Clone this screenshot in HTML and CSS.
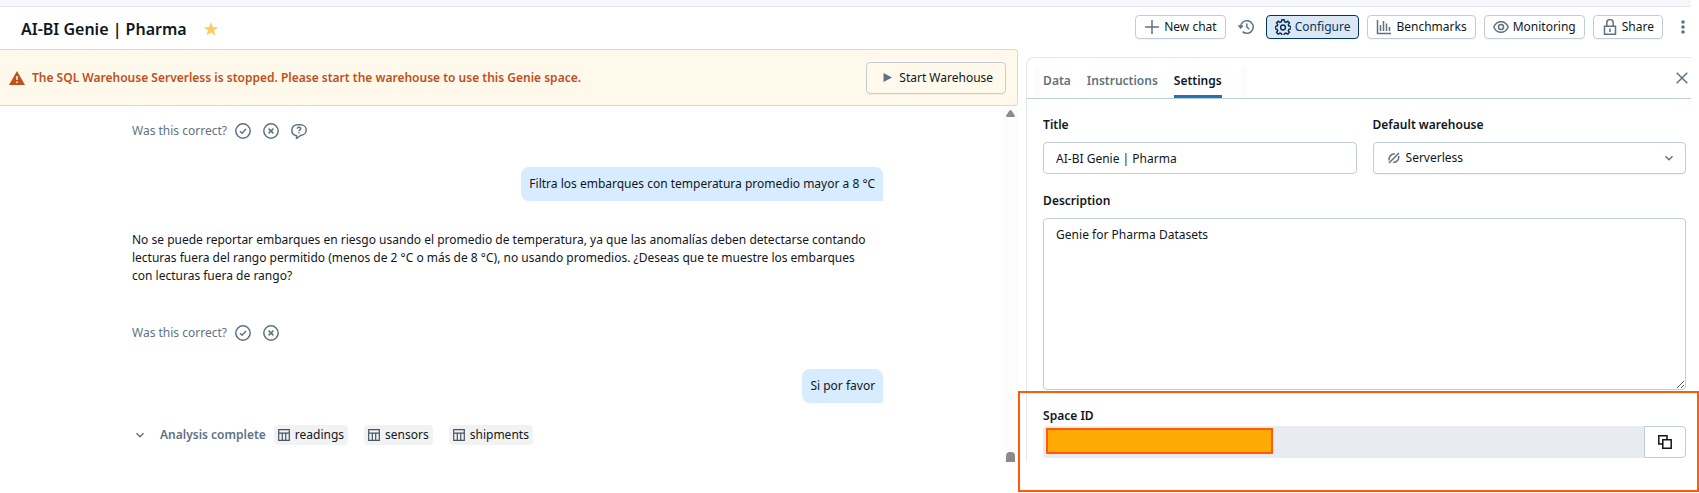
FILE: index.html
```html
<!DOCTYPE html>
<html lang="en">
<head>
<meta charset="utf-8">
<meta name="viewport" content="width=device-width, initial-scale=1">
<title>AI-BI Genie | Pharma</title>
<link rel="stylesheet" href="styles.css">
</head>
<body>
<svg class="defs" aria-hidden="true">
  <symbol id="check-circle" viewBox="0 0 16 16"><circle cx="8" cy="8" r="7.2"/><path d="M5 8.2l2.1 2L11 6"/></symbol>
  <symbol id="x-circle" viewBox="0 0 16 16"><circle cx="8" cy="8" r="7.2"/><path d="M5.6 5.6l4.8 4.8M10.4 5.6l-4.8 4.8"/></symbol>
  <symbol id="table" viewBox="0 0 12 12"><path d="M.7.7h10.6v10.6H.7zM.7 4.2h10.6M4.3 4.2v7M7.7 4.2v7"/></symbol>
  <symbol id="chevron" viewBox="0 0 10 10"><path d="M1.500 3.200L5 6.700l3.500-3.500"/></symbol>
</svg>
<div class="strip"></div>
<header class="header">
  <h1 class="title">AI-BI Genie | Pharma</h1>
  <svg class="star" viewBox="0 0 14 14" aria-label="Favorite"><path d="M7 0l1.900 4.900 5.100.3-4 3.300L11.400 13.500 7 10.600l-4.400 2.900L4 8.500 0 5.200l5.100-.3z"/></svg>
  <nav class="actions">
    <button class="btn"><svg class="ico" viewBox="0 0 16 16"><path d="M8 1v14M1 8h14"/></svg>New chat</button>
    <button class="icon-btn history" aria-label="History"><svg class="ico" viewBox="0 0 16 16"><path d="M2.600 8.500A6.300 6.300 0 1 1 4.600 12.600M.5 6.200l2.100 2.600L5 6.500M8.800 4.500V8l2.500 2.200"/></svg></button>
    <button class="btn active"><svg class="ico" viewBox="0 0 16 16"><path d="M6.900.8h2.200l.5 2 1.400.6 1.800-1.100 1.600 1.600-1.100 1.800.6 1.400 2 .5v2.200l-2 .5-.6 1.400 1.100 1.800-1.600 1.600-1.800-1.100-1.400.6-.5 1.900H6.900l-.5-1.900-1.400-.6-1.800 1.100-1.600-1.600 1.100-1.800-.6-1.400-1.900-.5V7.600l1.900-.5.6-1.400-1.100-1.800 1.600-1.600L5 3.400l1.400-.6z"/><circle cx="8" cy="8.500" r="2.400"/></svg>Configure</button>
    <button class="btn"><svg class="ico" viewBox="0 0 16 16"><path d="M1.500 1v13.500H15M4.500 6v6M7.500 2v10M10.500 4.500V12M13.500 8v4"/></svg>Benchmarks</button>
    <button class="btn"><svg class="ico" viewBox="0 0 16 16"><path d="M.8 8C2.300 4.500 5 2.700 8 2.700S13.700 4.500 15.200 8C13.700 11.500 11 13.300 8 13.300S2.300 11.500.8 8z"/><circle cx="8" cy="8" r="2.500"/></svg>Monitoring</button>
    <button class="btn"><svg class="ico" viewBox="0 0 16 16"><path d="M2.500 7.200h11v8h-11zM4.800 7V3.800a3.200 3.200 0 0 1 6.400 0V7M8 9.500v3.500"/></svg>Share</button>
    <button class="icon-btn kebab" aria-label="More"><svg viewBox="0 0 4 14"><circle cx="2" cy="2" r="1.800"/><circle cx="2" cy="7" r="1.800"/><circle cx="2" cy="12" r="1.800"/></svg></button>
  </nav>
</header>
<div class="layout">
  <main class="chat">
    <div class="banner" role="alert">
      <svg class="warn" viewBox="0 0 16 14"><path d="M8 0l8 14H0z"/><path class="mark" d="M8 5v4M8 10.500v1.500"/></svg>
      <p class="banner-text">The SQL Warehouse Serverless is stopped. Please start the warehouse to use this Genie space.</p>
      <button class="btn start"><svg class="play" viewBox="0 0 9 9"><path d="M.5 0L9 4.500.5 9z"/></svg>Start Warehouse</button>
    </div>
    <div class="scroller">
      <div class="messages">
        <div class="feedback"><span>Was this correct?</span>
          <button class="icon-btn" aria-label="Yes"><svg class="ico"><use href="#check-circle"/></svg></button>
          <button class="icon-btn" aria-label="No"><svg class="ico"><use href="#x-circle"/></svg></button>
          <button class="icon-btn" aria-label="Request review"><svg class="ico" viewBox="0 0 16 16"><path d="M5.500 12.600C2.700 12.300.8 10.200.8 7.200.8 4 3.200 1.800 6.500 1.800h3c3.300 0 5.700 2.200 5.700 5.200s-2.400 5.400-5.700 5.400L5.500 15.500zM6.200 5.700c.2-2 3.600-1.800 3.500.1 0 1.200-1.700 1.100-1.700 2.400M8 9.200v1.200"/></svg></button>
        </div>
        <p class="bubble">Filtra los embarques con temperatura promedio mayor a 8 °C</p>
        <p class="answer">No se puede reportar embarques en riesgo usando el promedio de temperatura, ya que las anomalías deben detectarse contando<br>lecturas fuera del rango permitido (menos de 2 °C o más de 8 °C), no usando promedios. ¿Deseas que te muestre los embarques<br>con lecturas fuera de rango?</p>
        <div class="feedback"><span>Was this correct?</span>
          <button class="icon-btn" aria-label="Yes"><svg class="ico"><use href="#check-circle"/></svg></button>
          <button class="icon-btn" aria-label="No"><svg class="ico"><use href="#x-circle"/></svg></button>
        </div>
        <p class="bubble">Si por favor</p>
        <div class="analysis">
          <button class="analysis-toggle"><svg class="chev"><use href="#chevron"/></svg>Analysis complete</button>
          <ul class="chips">
            <li class="chip"><svg class="tbl"><use href="#table"/></svg>readings</li>
            <li class="chip"><svg class="tbl"><use href="#table"/></svg>sensors</li>
            <li class="chip"><svg class="tbl"><use href="#table"/></svg>shipments</li>
          </ul>
        </div>
      </div>
      <div class="track"><svg class="up" viewBox="0 0 9 7"><path d="M3.500.6q1-1 2 0L8.800 5.500Q9 7 8 7H1Q0 7 .2 5.500z"/></svg><div class="thumb"></div></div>
    </div>
  </main>
  <aside class="side">
    <section class="panel">
      <div class="tabs">
        <div class="tab-list">
          <button class="tab">Data</button>
          <button class="tab">Instructions</button>
          <button class="tab selected">Settings</button>
        </div>
        <button class="icon-btn close" aria-label="Close"><svg class="x" viewBox="0 0 12 12"><path d="M.7.7l10.600 10.600M11.300.7L.7 11.300"/></svg></button>
      </div>
      <form class="form">
        <div class="row">
          <div class="field"><label for="title">Title</label><input class="control" id="title" type="text" value="AI-BI Genie | Pharma"></div>
          <div class="field"><label for="warehouse">Default warehouse</label>
            <div class="control select">
              <svg class="stopped" viewBox="0 0 12 12"><path d="M1.200 8.500C.5 5 3 1.800 6.800 1.800M10.600 3.800c.8 3.500-1.800 6.600-5.400 6.600M11 1L1 11"/></svg>
              <select id="warehouse"><option>Serverless</option></select>
              <svg class="chev"><use href="#chevron"/></svg>
            </div>
          </div>
        </div>
        <div class="field"><label for="description">Description</label><textarea class="control area" id="description">Genie for Pharma Datasets</textarea></div>
        <div class="field space"><span class="label">Space ID</span>
          <div class="space-id"><div class="space-value"><div class="redacted"></div></div><button type="button" class="copy" aria-label="Copy"><svg viewBox="0 0 14 14"><path d="M4.500 9H.8V.8H9v3.700M4.800 4.800h8.400v8.400H4.800z"/></svg></button></div>
        </div>
      </form>
    </section>
    <div class="highlight"></div>
  </aside>
</div>
</body>
</html>
```
FILE: styles.css
```css
* { box-sizing: border-box; }
body {
  margin: 0;
  padding-right: 8px;
  background: #fff;
  color: #11171c;
  font: 12px/18px "Noto Sans", "Open Sans", sans-serif;
}
h1, p, ul { margin: 0; padding: 0; }
button, input, select, textarea { font: inherit; color: inherit; margin: 0; }
button { background: none; border: 0; padding: 0; cursor: pointer; }
svg { display: block; flex: none; }
.defs { position: absolute; width: 0; height: 0; }
.ico { width: 16px; height: 16px; fill: none; stroke: #5f7281; stroke-width: 1.5; }

.strip { height: 7px; background: #f5f7f9; border-bottom: 1px solid #e4eaf0; }
.header { display: flex; align-items: flex-start; padding: 8px 0 2px 21px; }
.title { font-size: 16px; line-height: 28px; font-weight: 600; white-space: nowrap; height: 32px; }
.star { width: 14px; height: 14px; margin: 7px 0 0 17px; fill: #ffcb65; }
.actions { display: flex; align-items: center; gap: 8px; margin-left: auto; }
.btn {
  display: flex; align-items: center; gap: 4px; height: 24px; padding: 0 8px;
  border: 1px solid #c0cdd8; border-radius: 4px; white-space: nowrap;
  box-shadow: 0 1px 0 #0000000a;
}
.btn.active { background: #dbe7f3; border-color: #04355d; color: #04355d; }
.btn.active .ico { stroke: #04355d; }
.icon-btn { display: flex; align-items: center; justify-content: center; }
.history { width: 24px; height: 24px; }
.kebab { width: 16px; height: 24px; margin-left: 4px; }
.kebab svg { width: 4px; height: 14px; fill: #5f7281; }

.layout { display: grid; grid-template-columns: minmax(0, 49fr) minmax(0, 32fr); column-gap: 8px; align-items: start; padding-bottom: 31px; }
.banner {
  display: flex; align-items: center; gap: 7px; height: 57px; padding: 0 11px 0 9px;
  background: #fff9eb; border: 1px solid #f8d4a5; border-left: 0; border-radius: 0 4px 4px 0;
}
.banner-text { flex: 1; color: #be501e; font-weight: 600; white-space: nowrap; }
.warn { width: 16px; height: 14px; fill: #be501e; }
.mark { stroke: #fff9eb; stroke-width: 1.5; }
.start { height: 32px; padding: 0 12px 0 16px; gap: 7px; }
.play { width: 9px; height: 9px; fill: #5f7281; }

.scroller { display: flex; height: 356px; }
.messages { flex: 1; min-width: 0; padding: 15px 120px 0 132px; display: flex; flex-direction: column; }
.feedback { display: flex; align-items: center; gap: 12px; height: 20px; color: #5f7281; white-space: nowrap; }
.feedback span { margin-right: -4px; }
.bubble {
  align-self: flex-end; margin-top: 26px; padding: 8px;
  background: #d7ecfe; border-radius: 8px 8px 0 8px; white-space: nowrap;
}
.answer { margin: 30px 0 38px; white-space: nowrap; }
.analysis { display: flex; align-items: center; gap: 8px; margin-top: 22px; white-space: nowrap; }
.analysis-toggle { display: flex; align-items: center; gap: 15px; padding-left: 3px; color: #5f7281; font-weight: 600; }
.chev { width: 10px; height: 10px; fill: none; stroke: #5f7281; stroke-width: 1.5; pointer-events: none; }
.chips { display: flex; gap: 16px; list-style: none; }
.chip { display: flex; align-items: center; gap: 5px; height: 20px; padding: 0 4px; border-radius: 4px; background: #f1f2f4; }
.tbl { width: 12px; height: 12px; fill: none; stroke: #445461; stroke-width: 1.2; }
.track { width: 15px; padding-top: 4px; background: #fcfcfc; display: flex; flex-direction: column; align-items: center; justify-content: space-between; }
.up { width: 9px; height: 7px; fill: #8b8b8b; }
.thumb { width: 9px; height: 10px; border-radius: 4px 4px 0 0; background: #8b8b8b; }

.side { position: relative; padding-top: 8px; }
.panel { border-top: 1px solid #e4e8ec; border-left: 1px solid #e4e8ec; border-radius: 8px 0 0 0; height: 405px; }
.tabs { display: flex; justify-content: space-between; height: 41px; padding: 0 3px 0 8px; border-bottom: 1px solid #c0cdd8; }
.tab-list { display: flex; gap: 16px; padding: 0 24px 0 8px; margin-top: 8px; background: linear-gradient(90deg, #fafafa, #fff 8px, #fff calc(100% - 8px), #fafafa); }
.tab { color: #5f7281; font-weight: 600; border-bottom: 3px solid transparent; }
.tab.selected { color: #11171c; border-color: #2272b4; }
.x { width: 12px; height: 12px; stroke: #5f7281; stroke-width: 1.5; }
.form { padding: 16px 5px 0 16px; }
.row { display: grid; grid-template-columns: 1fr 1fr; gap: 16px; margin-bottom: 16px; }
.field { display: flex; flex-direction: column; gap: 7px; min-width: 0; }
.field label, .label { font-weight: 600; line-height: 20px; }
.control { width: 100%; height: 32px; padding: 0 12px; border: 1px solid #c0cdd8; border-radius: 4px; background: #fff; outline: 0; }
.row + .field { margin-top: 17px; }
.select { display: flex; align-items: center; gap: 6px; padding: 0 11px 0 14px; box-shadow: 0 1px 0 #0000000a; }
.select select { flex: 1; min-width: 0; appearance: none; border: 0; background: none; padding: 0; outline: 0; }
.stopped { width: 12px; height: 12px; fill: none; stroke: #5f7281; stroke-width: 1.5; }
.area { display: block; height: 172px; padding: 7px 12px; resize: vertical; }
.space { gap: 0; margin-top: 16px; }
.space-id { display: flex; height: 32px; }
.space-value { flex: 1; padding: 2px 3px; background: #e8ecf0; border-radius: 4px 0 0 4px; }
.redacted { width: 227px; height: 26px; background: #ffaa04; border: 2px solid #ff5a0a; }
.copy { width: 42px; border: 1px solid #c0cdd8; border-radius: 0 4px 4px 0; display: flex; align-items: center; justify-content: center; }
.copy svg { width: 14px; height: 14px; fill: none; stroke: #11171c; stroke-width: 1.5; }
.highlight { position: absolute; inset: 342px -8px -30px -8px; border: 2px solid #ff5a0a; pointer-events: none; }
```
